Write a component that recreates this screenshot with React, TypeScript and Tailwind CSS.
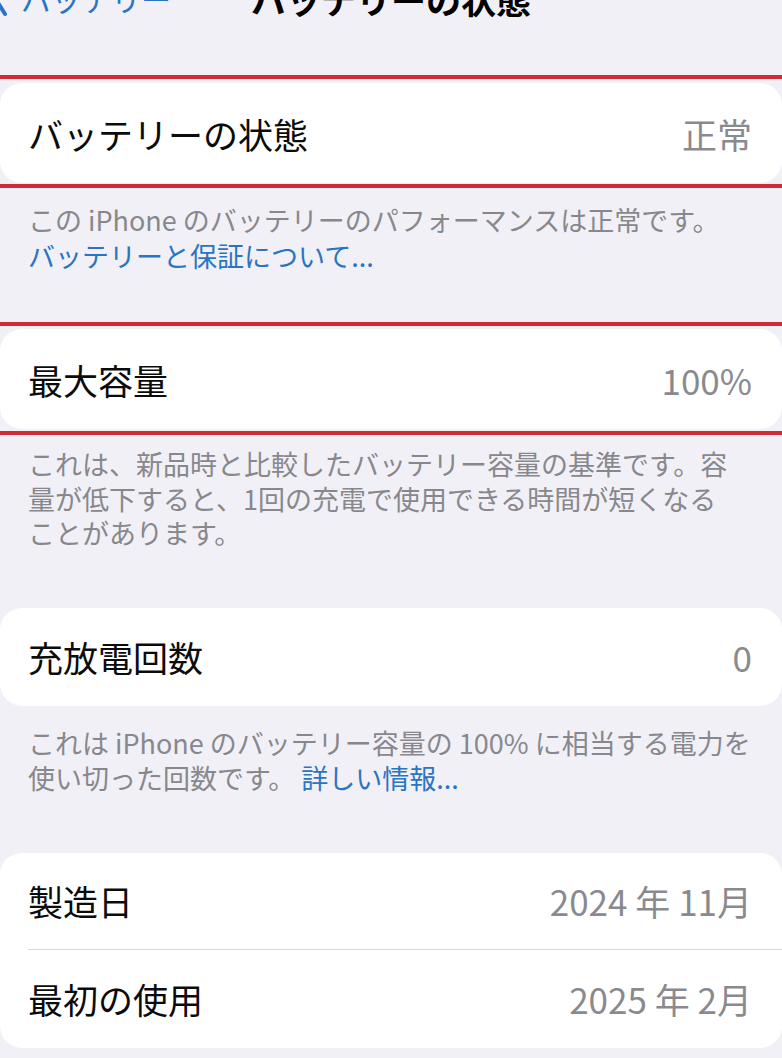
const font = { fontFamily: '"Noto Sans CJK JP", "Noto Sans", sans-serif' }

function RedLine({ className = '' }: { className?: string }) {
    return <div className={`h-[4px] w-full bg-[#cf2a35] ${className}`} />
}

function Row({ label, value, className = '' }: { label: string; value: string; className?: string }) {
    return (
        <div className={`flex items-center justify-between pl-[28px] pr-[30px] ${className}`}>
            <span className="text-[35px] leading-none text-[#0b0b0c]">{label}</span>
            <span className="text-[35px] leading-none text-[#8a8a8e]">{value}</span>
        </div>
    )
}

export default function App() {
    return (
        <div className="h-[1058px] w-[782px] overflow-hidden bg-[#f1f0f6]" style={font}>
            {/* Nav bar, cut at the top of the screenshot */}
            <div className="relative mt-[-24px] flex h-[44px] items-center">
                <div className="flex items-center text-[#2a74c4]">
                    <svg width="16" height="40" viewBox="0 0 16 40" className="-ml-[9px]">
                        <path d="M14 4 L4 20 L14 36" fill="none" stroke="currentColor" strokeWidth="4" strokeLinecap="round" strokeLinejoin="round" />
                    </svg>
                    <span className="ml-[14px] text-[30px] leading-none">バッテリー</span>
                </div>
                <div className="absolute inset-x-0 text-center text-[35px] font-bold leading-none text-black">
                    バッテリーの状態
                </div>
            </div>

            <RedLine className="mt-[55px]" />
            <div className="mt-[4px] h-[100px] rounded-[22px] bg-white">
                <Row label="バッテリーの状態" value="正常" className="h-full" />
            </div>
            <RedLine className="mt-[1px]" />

            <div className="pl-[28px] pr-[24px] pt-[14px] text-[27px] leading-[36px] text-[#88888c]">
                <div className="whitespace-nowrap">この iPhone のバッテリーのパフォーマンスは正常です。</div>
                <div className="whitespace-nowrap text-[#2a74c4]">バッテリーと保証について...</div>
            </div>

            <RedLine className="mt-[48px]" />
            <div className="mt-[3px] h-[100px] rounded-[22px] bg-white">
                <Row label="最大容量" value="100%" className="h-full" />
            </div>
            <RedLine className="mt-[2px]" />

            <div className="pl-[28px] pr-[24px] pt-[12px] text-[27px] leading-[34.5px] text-[#88888c]">
                <div className="whitespace-nowrap">これは、新品時と比較したバッテリー容量の基準です。容</div>
                <div className="whitespace-nowrap">量が低下すると、1回の充電で使用できる時間が短くなる</div>
                <div className="whitespace-nowrap">ことがあります。</div>
            </div>

            <div className="mt-[57px] h-[98px] rounded-[22px] bg-white">
                <Row label="充放電回数" value="0" className="h-full" />
            </div>

            <div className="pl-[28px] pr-[24px] pt-[19px] text-[27px] leading-[35px] text-[#88888c]">
                <div className="whitespace-nowrap">これは iPhone のバッテリー容量の 100% に相当する電力を</div>
                <div className="whitespace-nowrap">
                    使い切った回数です。 <span className="text-[#2a74c4]">詳しい情報...</span>
                </div>
            </div>

            <div className="mt-[58px] rounded-[22px] bg-white">
                <Row label="製造日" value="2024 年 11月" className="h-[96px]" />
                <div className="ml-[28px] h-[1px] bg-[#d9d9dd]" />
                <Row label="最初の使用" value="2025 年 2月" className="h-[98px]" />
            </div>
        </div>
    )
}
